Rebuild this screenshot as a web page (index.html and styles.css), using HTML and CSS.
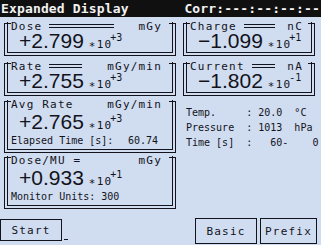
FILE: index.html
```html
<!DOCTYPE html>
<html lang="en">
<head>
    <meta charset="UTF-8">
    <title>Expanded Display</title>
    <link rel="stylesheet" href="styles.css">
</head>
<body>
    <div class="screen">
        <header class="titlebar">
            <span class="title">Expanded Display</span>
            <span class="corr">Corr:---:--:--:--</span>
        </header>

        <main class="panels">
            <section class="col left">
                <div class="box dose">
                    <div class="inner">
                        <div class="head"><span class="lbl">Dose</span><span class="bar"></span><span class="unit">mGy</span></div>
                        <div class="val"><span class="num">+2.799</span><span class="exp"><span class="star">*</span>10<sup>+3</sup></span></div>
                    </div>
                </div>
                <div class="box rate">
                    <div class="inner">
                        <div class="head"><span class="lbl">Rate</span><span class="bar"></span><span class="unit">mGy/min</span></div>
                        <div class="val"><span class="num">+2.755</span><span class="exp"><span class="star">*</span>10<sup>+3</sup></span></div>
                    </div>
                </div>
                <div class="box avg">
                    <div class="inner">
                        <div class="head"><span class="lbl">Avg Rate</span><span class="unit">mGy/min</span></div>
                        <div class="val"><span class="num">+2.765</span><span class="exp"><span class="star">*</span>10<sup>+3</sup></span></div>
                        <div class="info"><span>Elapsed Time [s]:</span><span>60.74</span></div>
                    </div>
                </div>
                <div class="box mu">
                    <div class="inner">
                        <div class="head"><span class="lbl">Dose/MU =</span><span class="unit">mGy</span></div>
                        <div class="val"><span class="num">+0.933</span><span class="exp"><span class="star">*</span>10<sup>+1</sup></span></div>
                        <div class="info"><span>Monitor Units: 300</span></div>
                    </div>
                </div>
            </section>

            <section class="col right">
                <div class="box charge">
                    <div class="inner">
                        <div class="head"><span class="lbl">Charge</span><span class="bar"></span><span class="unit">nC</span></div>
                        <div class="val"><span class="num">&minus;1.099</span><span class="exp"><span class="star">*</span>10<sup>+1</sup></span></div>
                    </div>
                </div>
                <div class="box current">
                    <div class="inner">
                        <div class="head"><span class="lbl">Current</span><span class="bar"></span><span class="unit">nA</span></div>
                        <div class="val"><span class="num">&minus;1.802</span><span class="exp"><span class="star">*</span>10<sup>-1</sup></span></div>
                    </div>
                </div>
                <div class="readings">
                    <div class="line">Temp.     : 20.0  °C</div>
                    <div class="line">Pressure  : 1013  hPa</div>
                    <div class="line">Time [s]  :   60-    0</div>
                </div>
            </section>
        </main>

        <footer class="buttons">
            <div class="btn start">Start</div>
            <span class="cursor"></span>
            <div class="btn basic">Basic</div>
            <div class="btn prefix">Prefix</div>
        </footer>
    </div>
</body>
</html>
```

FILE: styles.css
```css
body {
    margin: 0;
    background: #d0dcef;
    color: #12131c;
    font-family: "DejaVu Sans Mono", monospace;
    font-size: 11px;
}
.screen {
    width: 321px;
    height: 245px;
    display: flex;
    flex-direction: column;
    overflow: hidden;
}
.titlebar {
    display: flex;
    height: 17px;
    background: #101010;
    color: #f2f2f2;
    font-weight: bold;
    font-size: 13px;
    line-height: 17px;
    letter-spacing: 0.15px;
}
.title {
    padding-left: 1px;
}
.corr {
    margin-left: auto;
    padding-right: 1px;
}

.panels {
    display: grid;
    grid-template-columns: 172px 132px;
    column-gap: 7px;
    padding: 6px 0 0 4px;
}
.col {
    display: flex;
    flex-direction: column;
}
.box {
    border: 1px solid #12131c;
    border-top: 0;
    padding: 4px 2px 2px;
    background:
        linear-gradient(#12131c, #12131c) left top / 6px 1px no-repeat,
        linear-gradient(#12131c, #12131c) right top / 6px 1px no-repeat;
}
.rate, .current {
    margin-top: 7px;
}
.avg {
    margin-top: 5px;
}
.mu {
    margin-top: 4px;
}
.inner {
    border: 1px solid #12131c;
    border-top: 0;
    padding-bottom: 1px;
}
.head {
    display: flex;
    height: 10px;
    margin-top: -5px;
    padding: 0 10px 0 3px;
    line-height: 10px;
    letter-spacing: 1.2px;
    white-space: pre;
}
.right .head {
    padding-right: 8px;
}
.bar {
    flex: 1;
    height: 2px;
    margin: 2px 25px 0 7px;
    border-top: 1px solid #12131c;
    border-bottom: 1px solid #12131c;
}
.right .bar {
    margin-right: 12px;
}
.unit {
    margin-left: auto;
}
.val {
    height: 20px;
    margin-top: -1px;
    padding-left: 11px;
    font-family: "Liberation Sans", sans-serif;
    font-size: 21px;
    line-height: 20px;
    white-space: nowrap;
}
.avg .val, .mu .val {
    margin-top: 2px;
}
.exp {
    margin-left: 5px;
    font-family: "DejaVu Sans Mono", monospace;
    font-size: 11px;
    line-height: 1;
    letter-spacing: 1.2px;
}
.star {
    vertical-align: -2px;
}
.exp sup {
    margin-left: -2px;
    font-size: 10px;
    line-height: 0;
    letter-spacing: 0;
    vertical-align: 7px;
}
.info {
    display: flex;
    justify-content: space-between;
    height: 14px;
    margin-top: 2px;
    padding: 0 14px 0 3px;
    font-size: 10px;
    line-height: 14px;
    white-space: pre;
}

.readings {
    margin-top: 9px;
    padding-left: 3px;
    font-size: 10px;
    line-height: 15px;
}
.line {
    white-space: pre;
}

.buttons {
    display: flex;
    align-items: flex-start;
    margin-top: auto;
    height: 27px;
    padding-right: 4px;
}
.btn {
    display: flex;
    align-items: center;
    justify-content: center;
    box-sizing: border-box;
    height: 22px;
    border: 1px solid #12131c;
    letter-spacing: 1.2px;
}
.start {
    width: 62px;
    margin-top: 1px;
}
.cursor {
    align-self: flex-end;
    width: 4px;
    height: 1px;
    margin: 0 0 5px 2px;
    background: #12131c;
}
.basic {
    width: 62px;
    height: 26px;
    margin-left: auto;
}
.prefix {
    width: 57px;
    height: 26px;
    margin-left: 3px;
}
```
